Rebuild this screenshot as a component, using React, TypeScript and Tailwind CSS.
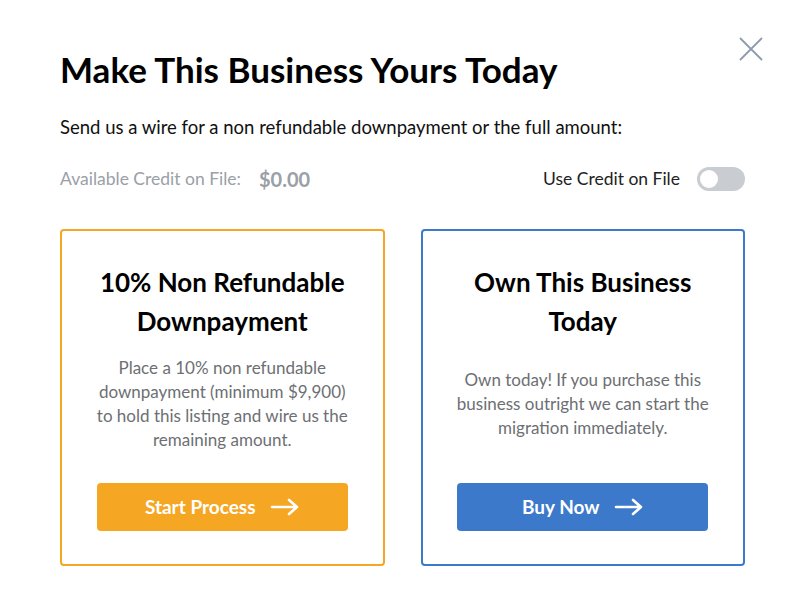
function Arrow() {
  return (
    <svg className="h-[18px] w-[30px]" viewBox="0 0 30 18" fill="none" stroke="currentColor" strokeWidth={2.6} strokeLinecap="round" strokeLinejoin="round">
      <path d="M2 9h25M19 2l8 7-8 7" />
    </svg>
  );
}

export default function App() {
  return (
    <div className="relative min-h-screen bg-white px-[60px] pt-[48px] text-black" style={{ fontFamily: 'Lato, "Open Sans", sans-serif' }}>
      <button type="button" className="absolute left-[739px] top-[37px] text-[#8d9cad]" aria-label="Close">
        <svg className="h-[24px] w-[24px]" viewBox="0 0 24 24" fill="none" stroke="currentColor" strokeWidth={1.8} strokeLinecap="round">
          <path d="M1.5 1.5l21 21M22.5 1.5l-21 21" />
        </svg>
      </button>

      <h1 className="text-[35px] font-bold leading-[42px] text-black">Make This Business Yours Today</h1>
      <p className="mt-[25px] text-[18.5px] leading-6 text-[#111]">
        Send us a wire for a non refundable downpayment or the full amount:
      </p>

      <div className="mt-[28px] flex h-[24px] items-center justify-between">
        <div className="flex items-center gap-[18px] text-[#9aa0a7]">
          <span className="text-[17.5px]">Available Credit on File:</span>
          <span className="text-[20px] font-bold">$0.00</span>
        </div>
        <div className="flex items-center gap-[17px]">
          <span className="text-[17.5px] text-[#222]">Use Credit on File</span>
          <div className="flex h-[24px] w-[48px] items-center rounded-full bg-[#c9ccd1] p-[3px]">
            <div className="h-[18px] w-[18px] rounded-full bg-white" />
          </div>
        </div>
      </div>

      <div className="mt-[38px] grid grid-cols-2 gap-[36px]">
        <div className="flex h-[337px] flex-col items-center rounded-[4px] border-2 border-[#f5a623] px-[34px] pb-[33px] pt-[32px] text-center">
          <h2 className="text-[26px] font-bold leading-[39px]">10% Non Refundable Downpayment</h2>
          <div className="mb-[16px] flex flex-1 items-center">
            <p className="text-[17px] leading-6 text-[#6d6f73]">
              Place a 10% non refundable downpayment (minimum $9,900) to hold this listing and wire us the remaining amount.
            </p>
          </div>
          <button type="button" className="flex h-[48px] w-[251px] items-center justify-center gap-[14px] rounded-[4px] bg-[#f5a623] text-[19px] font-bold text-white">
            Start Process
            <Arrow />
          </button>
        </div>

        <div className="flex h-[337px] flex-col items-center rounded-[4px] border-2 border-[#3d79ca] px-[34px] pb-[33px] pt-[32px] text-center">
          <h2 className="px-[10px] text-[26px] font-bold leading-[39px]">Own This Business Today</h2>
          <div className="mb-[16px] flex flex-1 items-center">
            <p className="text-[17px] leading-6 text-[#6d6f73]">
              Own today! If you purchase this business outright we can start the migration immediately.
            </p>
          </div>
          <button type="button" className="flex h-[48px] w-[251px] items-center justify-center gap-[14px] rounded-[4px] bg-[#3d79ca] text-[19px] font-bold text-white">
            Buy Now
            <Arrow />
          </button>
        </div>
      </div>
    </div>
  );
}
